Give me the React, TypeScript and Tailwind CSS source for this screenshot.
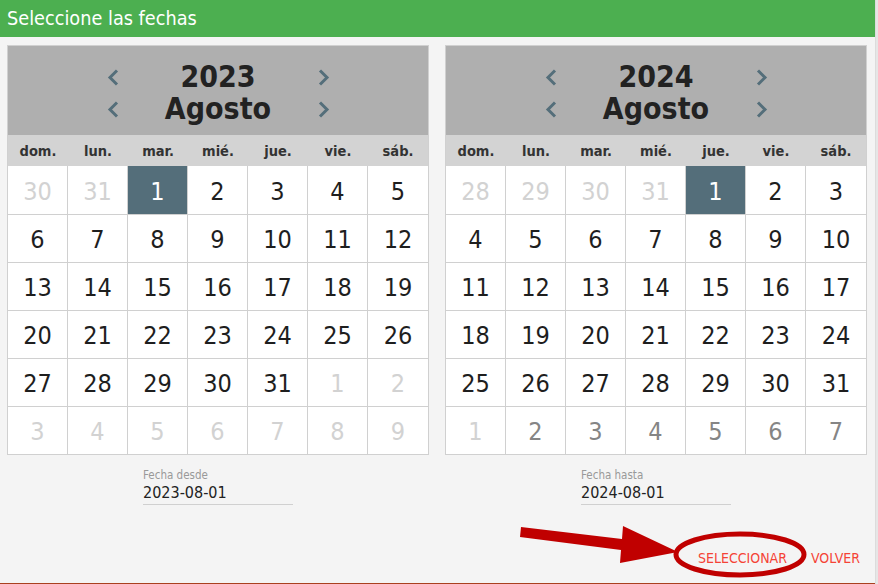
import React from "react";

type Tone = "on" | "off" | "dim" | "sel";
type Cell = { n: number; tone: Tone };

const days = ["dom.", "lun.", "mar.", "mié.", "jue.", "vie.", "sáb."];

function range(a: number, b: number, tone: Tone = "on"): Cell[] {
  const out: Cell[] = [];
  for (let i = a; i <= b; i++) out.push({ n: i, tone });
  return out;
}

const cal2023: Cell[] = [
  ...range(30, 31, "off"),
  { n: 1, tone: "sel" },
  ...range(2, 31),
  ...range(1, 9, "off"),
];

const cal2024: Cell[] = [
  ...range(28, 31, "off"),
  { n: 1, tone: "sel" },
  ...range(2, 31),
  { n: 1, tone: "off" },
  ...range(2, 7, "dim"),
];

const toneClass: Record<Tone, string> = {
  on: "text-[#1e1e1e]",
  off: "text-[#d2d2d2]",
  dim: "text-[#858585]",
  sel: "bg-[#546e7a] text-white",
};

function Chevron({ dir }: { dir: "left" | "right" }) {
  return (
    <svg width="12" height="17" viewBox="0 0 12 17" className="shrink-0">
      <polyline
        points={dir === "left" ? "10,1.5 3,8.5 10,15.5" : "2,1.5 9,8.5 2,15.5"}
        fill="none"
        stroke="#546e7a"
        strokeWidth="3"
      />
    </svg>
  );
}

function Calendar({ year, cells }: { year: number; cells: Cell[] }) {
  return (
    <div className="w-[422px] border border-[#d0d0d0] bg-white">
      {/* year / month header */}
      <div className="h-[89px] bg-[#afafaf] pt-[15px] flex flex-col items-center">
        <div className="w-[223px] flex items-center justify-between h-[32px]">
          <Chevron dir="left" />
          <span className="text-[30px] leading-[32px] font-bold text-[#222]">{year}</span>
          <Chevron dir="right" />
        </div>
        <div className="w-[223px] flex items-center justify-between h-[32px]">
          <Chevron dir="left" />
          <span className="text-[30px] leading-[32px] font-bold text-[#222]">Agosto</span>
          <Chevron dir="right" />
        </div>
      </div>

      {/* weekday names */}
      <div className="grid grid-cols-7 h-[31px] bg-[#d3d3d3]">
        {days.map((d) => (
          <div key={d} className="flex items-center justify-center pt-[2px] text-[14.5px] font-bold text-[#333]">
            {d}
          </div>
        ))}
      </div>

      {/* days */}
      <div className="grid grid-cols-7">
        {cells.map((c, i) => (
          <div
            key={i}
            className={`h-[48px] flex items-center justify-center pt-[3px] text-[25px] ${
              i % 7 !== 6 ? "border-r border-[#d0d0d0]" : ""
            } ${i >= 7 ? "border-t border-[#d0d0d0]" : ""} ${toneClass[c.tone]}`}
          >
            {c.n}
          </div>
        ))}
      </div>
    </div>
  );
}

function DateField({ label, value }: { label: string; value: string }) {
  return (
    <div className="w-[150px] mt-[13px] mx-auto">
      <div className="text-[11.5px] leading-[14px] text-[#999]">{label}</div>
      <div className="text-[16px] leading-[20px] text-[#222] border-b border-[#d0d0d0] pt-[1px] pb-[1px]">{value}</div>
    </div>
  );
}

export default function App() {
  return (
    <div className="relative w-[878px] h-[584px] overflow-hidden bg-[#f4f4f4] font-['DejaVu_Sans_Condensed','DejaVu_Sans',sans-serif] font-stretch-condensed">
      <div className="flex h-full">
        <div className="w-[876px] flex flex-col border-r border-[#dcdcdc]">
          {/* title bar */}
          <div className="h-[37px] bg-[#4caf50] flex items-center pl-[7px] text-[19.7px] text-white">
            Seleccione las fechas
          </div>

          {/* calendars */}
          <div className="flex gap-[16px] pl-[7px] pt-[8px]">
            <div className="flex flex-col">
              <Calendar year={2023} cells={cal2023} />
              <DateField label="Fecha desde" value="2023-08-01" />
            </div>
            <div className="flex flex-col">
              <Calendar year={2024} cells={cal2024} />
              <DateField label="Fecha hasta" value="2024-08-01" />
            </div>
          </div>

          {/* actions */}
          <div className="flex justify-end items-center gap-[24px] pr-[15px] mt-[43px] text-[14px] text-[#f44336]">
            <span>SELECCIONAR</span>
            <span>VOLVER</span>
          </div>

          <div className="mt-auto h-[1px] bg-[#a9401f]" />
        </div>
        <div className="flex-1 bg-[#e6e6e6]" />
      </div>

      {/* annotation: arrow + ellipse */}
      <svg className="absolute inset-0 pointer-events-none" width="878" height="584" viewBox="0 0 878 584">
        <polygon
          points="521,527 622,539 623,526 678,552 620,563 621,550 520,537"
          fill="#c00000"
        />
        <ellipse cx="740" cy="554.5" rx="64" ry="20.5" fill="none" stroke="#c00000" strokeWidth="5" />
      </svg>
    </div>
  );
}
